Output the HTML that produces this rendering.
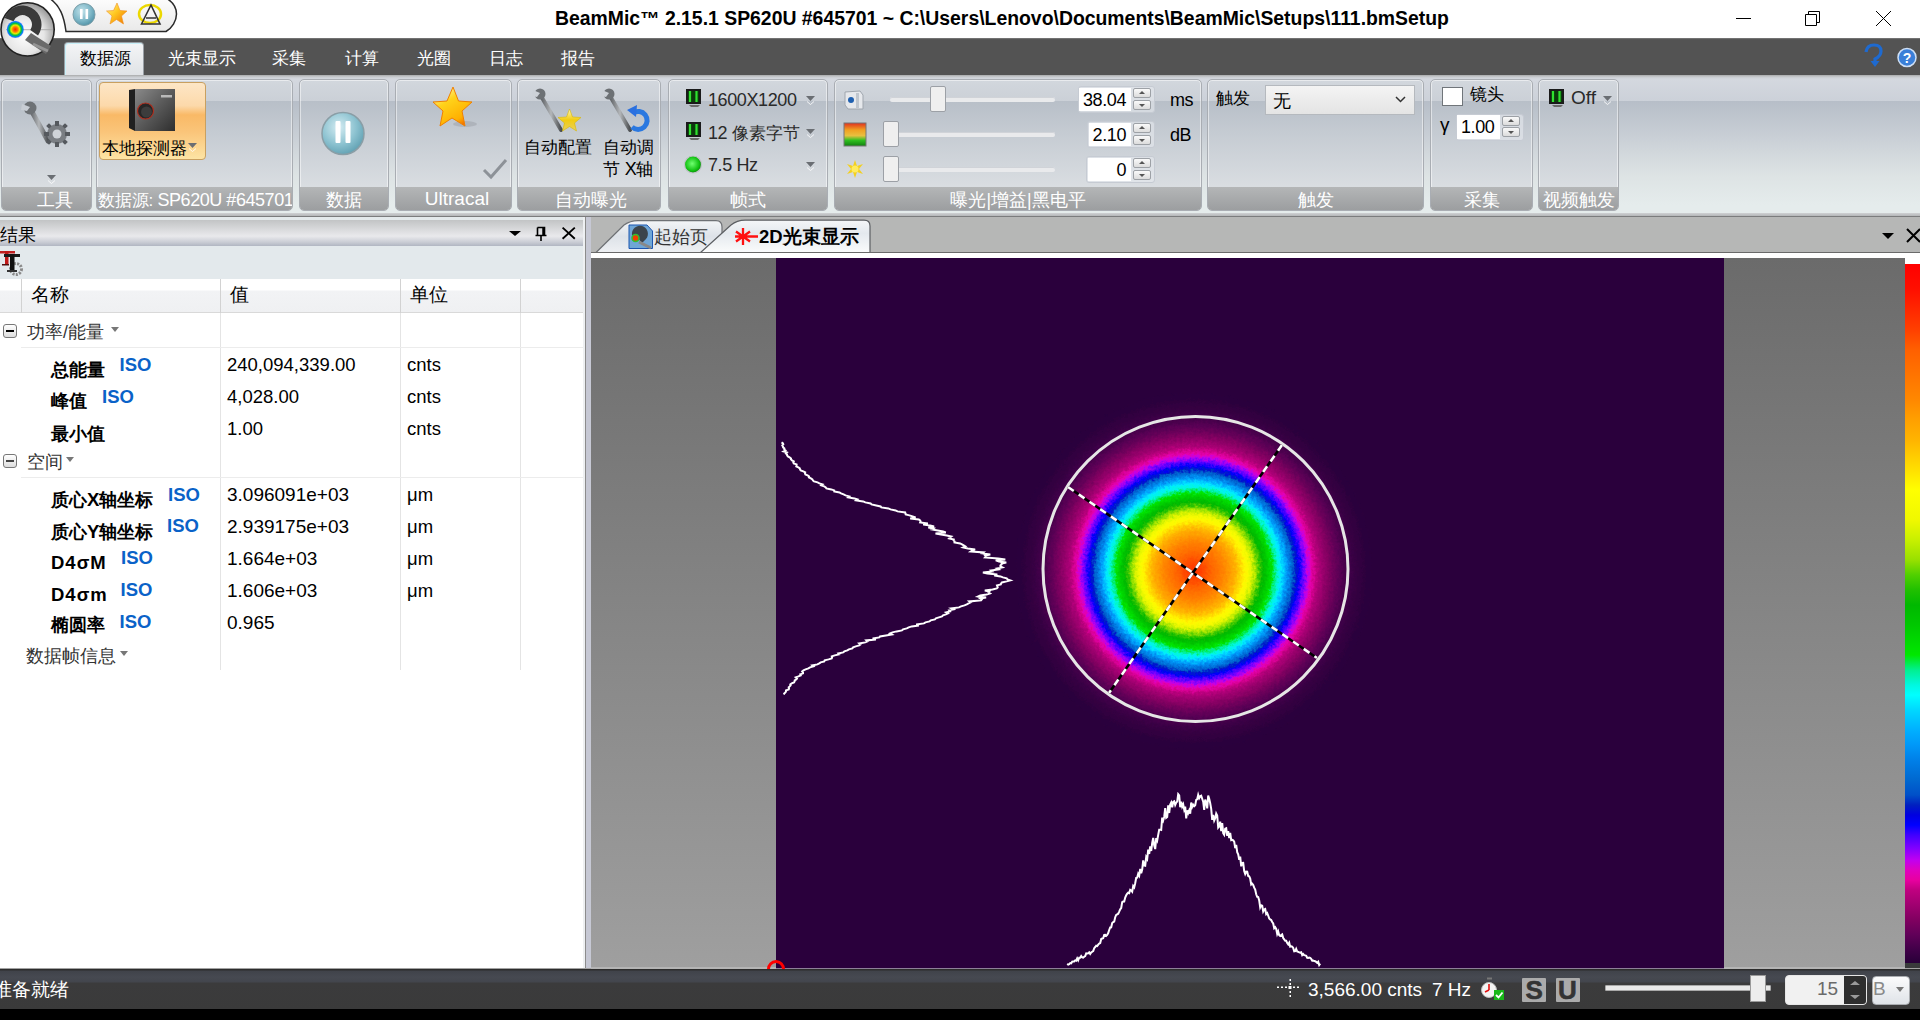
<!DOCTYPE html>
<html><head><meta charset="utf-8">
<style>
*{box-sizing:border-box;margin:0;padding:0}
html,body{width:1920px;height:1020px;overflow:hidden;background:#000;font-family:"Liberation Sans",sans-serif;color:#000}
.a{position:absolute}
.t{position:absolute;white-space:nowrap;line-height:20px}
.c17{font-size:17px}
.l18{font-size:18px;letter-spacing:-0.4px}
.r18{font-size:18.5px}
.b{font-weight:bold}
.mt{position:absolute;top:49px;color:#fff;font-size:17px;white-space:nowrap;line-height:20px}
.grp{position:absolute;top:79px;height:132px;border:1px solid #a9adb3;border-radius:5px;background:linear-gradient(#d2d7dd 0,#cbd0d7 21px,#b8bfc8 21.5px,#c6ccd3 55px,#d9dde1 106px);box-shadow:inset 0 0 0 1px rgba(255,255,255,.5);overflow:hidden}
.lbl{position:absolute;left:0;right:0;bottom:0;height:23.5px;background:linear-gradient(#b4b6b7,#9c9ea0);color:#fff;font-size:17.5px;text-align:center;line-height:20px;padding-top:3px;white-space:nowrap}
.spo{position:absolute;border:1px solid #c6cbd3;border-radius:3px;background:rgba(230,233,238,.6)}
.spw{position:absolute;background:#fff}
.sbtn{position:absolute;width:18px;height:10px;border:1px solid #9da1a6;border-radius:2px;background:linear-gradient(#fafafa,#dcdcdc)}
.sbtn.u::after{content:"";position:absolute;left:5px;top:2px;border-left:3.5px solid transparent;border-right:3.5px solid transparent;border-bottom:3px solid #555}
.sbtn.d::after{content:"";position:absolute;left:5px;top:3px;border-left:3.5px solid transparent;border-right:3.5px solid transparent;border-top:3px solid #555}
.track{position:absolute;height:5px;background:#e9eaec;border-radius:2px;box-shadow:inset 0 1px 0 #d0d3d8}
.thumb{position:absolute;width:16px;height:26px;background:#efefef;border:1px solid #9ca0a6;border-radius:2px}
.vline{position:absolute;width:1px;background:#e4e4e4}
.iso{position:absolute;color:#0a62c8;font-weight:bold;font-size:18.5px;line-height:20px}
.arr{position:absolute;width:0;height:0;border-left:4px solid transparent;border-right:4px solid transparent;border-top:5px solid #777}
</style></head><body>
<!-- TITLE BAR -->
<div class="a" style="left:0;top:0;width:1920px;height:39px;background:#fff"></div>
<div class="t b" style="left:555px;top:8px;font-size:19.4px">BeamMic™ 2.15.1 SP620U #645701 ~ C:\Users\Lenovo\Documents\BeamMic\Setups\111.bmSetup</div>
<div class="a" style="left:1736px;top:18px;width:15px;height:1px;background:#000"></div>
<svg class="a" style="left:1800px;top:5px" width="25" height="25"><path d="M5.5 9.5H16.5V20.5H5.5Z M8.5 9.5V6.5H19.5V17.5H16.5" fill="none" stroke="#000" stroke-width="1"/></svg>
<svg class="a" style="left:1870px;top:5px" width="25" height="25"><path d="M6 6L21 21M21 6L6 21" stroke="#000" stroke-width="1"/></svg>

<!-- MENU BAR -->
<div class="a" style="left:0;top:38px;width:1920px;height:37px;background:linear-gradient(#8a8a8a 0,#5a5a5a 1px,#535353 2px,#535353)"></div>
<!-- QAT -->
<svg class="a" style="left:0;top:0" width="200" height="80">
 <defs>
  <linearGradient id="qg" x1="0" y1="0" x2="0" y2="1"><stop offset="0" stop-color="#fdfdfd"/><stop offset="1" stop-color="#e9e9e9"/></linearGradient>
  <radialGradient id="orbg" cx="0.45" cy="0.6" r="0.6"><stop offset="0" stop-color="#ffffff"/><stop offset="0.6" stop-color="#e6e6e6"/><stop offset="1" stop-color="#9a9a9a"/></radialGradient>
  <radialGradient id="spot"><stop offset="0" stop-color="#ff2000"/><stop offset="0.3" stop-color="#ff8000"/><stop offset="0.5" stop-color="#e0f000"/><stop offset="0.7" stop-color="#00c040"/><stop offset="0.9" stop-color="#0080ff"/><stop offset="1" stop-color="#3060ff" stop-opacity="0.6"/></radialGradient>
  <radialGradient id="pg" cx="0.4" cy="0.35" r="0.7"><stop offset="0" stop-color="#c2e2ea"/><stop offset="0.6" stop-color="#7fb8c8"/><stop offset="1" stop-color="#4d8fa5"/></radialGradient>
  <linearGradient id="sg" x1="0" y1="0" x2="1" y2="1"><stop offset="0" stop-color="#fff2a0"/><stop offset="0.45" stop-color="#ffc820"/><stop offset="1" stop-color="#f07000"/></linearGradient>
 </defs>
 <path d="M49 -2 C60 5,64 16,66 31.5 L166 31.5 C172 28,176.5 21,176.5 14 C176.5 7,173 2,166 -2 Z" fill="url(#qg)" stroke="#2a2a2a" stroke-width="1.5"/>
 <!-- orb -->
 <circle cx="27.6" cy="29.4" r="26.6" fill="url(#orbg)" stroke="#222" stroke-width="1.6"/>
 <path d="M6 29.7 H53" stroke="#a8a8a8" stroke-width="1.2" opacity=".7"/>
 <path d="M4.65 18 A19 19 0 1 1 38.06 35.4 L30.3 29.95 A9.5 9.5 0 1 0 13.57 21.25 Z" fill="#3a3a3a"/>
 <path d="M25 40 L31 33 L51 46 L46 54 Z" fill="#6a6a6a"/>
 <path d="M33 44 L48 51" stroke="#a0a0a0" stroke-width="3" opacity=".8"/>
 <circle cx="15.3" cy="29.4" r="8.6" fill="url(#spot)"/>
 <!-- pause -->
 <circle cx="84" cy="14.5" r="11" fill="url(#pg)" stroke="#7c9ea8" stroke-width="1"/>
 <rect x="80" y="9" width="2.6" height="10" fill="#fff"/><rect x="85.5" y="9" width="2.6" height="10" fill="#fff"/>
 <!-- star -->
 <path d="M117 3 L120 10.5 L127 11 L121.5 16 L123.5 24 L116.5 19.5 L110 24 L112 16 L106.5 11 L113.5 10.5 Z" fill="url(#sg)" stroke="#f09020" stroke-width="0.6"/>
 <!-- A icon -->
 <ellipse cx="150" cy="14" rx="11" ry="9" fill="none" stroke="#ecd800" stroke-width="2.5"/>
 <path d="M141.5 24 L151 5 L160 24 Z M146 18 L156 18" fill="none" stroke="#333" stroke-width="1.6"/>
</svg>
<!-- active tab -->
<div class="a" style="left:64px;top:42px;width:80px;height:34px;border:1px solid #9aa0a6;border-bottom:none;border-radius:4px 4px 0 0;background:linear-gradient(#f4f5f6,#dfe2e6);box-shadow:inset 1px 1px 0 #c8f0f8"></div>
<div class="mt" style="left:80px;color:#000">数据源</div>
<div class="mt" style="left:168px">光束显示</div>
<div class="mt" style="left:272px">采集</div>
<div class="mt" style="left:345px">计算</div>
<div class="mt" style="left:417px">光圈</div>
<div class="mt" style="left:489px">日志</div>
<div class="mt" style="left:561px">报告</div>

<!-- RIBBON -->
<div class="a" style="left:0;top:75px;width:1920px;height:142px;background:linear-gradient(#a9aaab 0,#c9ccd0 2px,#d4d8df 4px,#ccd1d9 26px,#b7bec8 26.5px,#c8ced5 60px,#dde3e4 100px,#e5ecec 130px,#e5ecec 138px,#cfd1d3 138px,#b4b6b8 141px,#7b7c7d 141px,#7b7c7d 142px)"></div>
<div class="grp" style="left:1px;width:91px"><div class="lbl" style="padding-left:16px">工具</div></div>
<div class="grp" style="left:96px;width:197px"><div class="lbl" style="text-align:left;padding-left:1px;font-size:17px;letter-spacing:-0.2px">数据源: <span style="font-size:18px;letter-spacing:-0.45px">SP620U #645701</span></div></div>
<div class="grp" style="left:299px;width:90px"><div class="lbl">数据</div></div>
<div class="grp" style="left:395px;width:117px"><div class="lbl" style="font-size:19px;padding-left:7px;padding-top:2.5px">Ultracal</div></div>
<div class="grp" style="left:517px;width:144px"><div class="lbl" style="padding-left:4px">自动曝光</div></div>
<div class="grp" style="left:668px;width:160px"><div class="lbl">帧式</div></div>
<div class="grp" style="left:834px;width:368px"><div class="lbl">曝光|增益|黑电平</div></div>
<div class="grp" style="left:1207px;width:217px"><div class="lbl">触发</div></div>
<div class="grp" style="left:1430px;width:103px"><div class="lbl">采集</div></div>
<div class="grp" style="left:1538px;width:81px"><div class="lbl">视频触发</div></div>

<div class="a" style="left:99px;top:82px;width:107px;height:78px;border:1px solid #c9a060;border-radius:4px;background:linear-gradient(#fde6c6 0,#fcd9aa 30%,#f9b966 42%,#fac57a 65%,#fde4a4 100%)"></div>
<div class="t c17" style="left:102px;top:139px">本地探测器</div>
<div class="t c17" style="left:524px;top:138px">自动配置</div>
<div class="t c17" style="left:603px;top:138px">自动调</div>
<div class="t c17" style="left:603px;top:159px">节 <span class="l18">X</span>轴</div>

<div class="t l18" style="left:708px;top:89.5px;color:#2a2a2a">1600X1200</div>
<div class="t c17" style="left:708px;top:122.8px;color:#2a2a2a"><span class="l18">12</span> 像素字节</div>
<div class="t l18" style="left:708px;top:154.8px;color:#2a2a2a">7.5 Hz</div>

<div class="track" style="left:890px;top:97px;width:165px"></div>
<div class="track" style="left:890px;top:132px;width:165px"></div>
<div class="track" style="left:890px;top:167px;width:165px"></div>
<div class="thumb" style="left:930px;top:86px"></div>
<div class="thumb" style="left:883px;top:121px"></div>
<div class="thumb" style="left:883px;top:156px"></div>

<div class="spo" style="left:1078px;top:86px;width:77px;height:27px"></div><div class="spw" style="left:1079px;top:88px;width:52px;height:23px"></div>
<div class="spo" style="left:1087px;top:121px;width:68px;height:27px"></div><div class="spw" style="left:1089px;top:123px;width:42px;height:23px"></div>
<div class="spo" style="left:1086px;top:156px;width:69px;height:27px"></div><div class="spw" style="left:1088px;top:158px;width:43px;height:23px"></div>
<div class="sbtn u" style="left:1133px;top:88px"></div><div class="sbtn d" style="left:1133px;top:100px"></div>
<div class="sbtn u" style="left:1133px;top:123px"></div><div class="sbtn d" style="left:1133px;top:135px"></div>
<div class="sbtn u" style="left:1133px;top:158px"></div><div class="sbtn d" style="left:1133px;top:170px"></div>
<div class="t l18" style="left:1082px;top:90px;width:44px;text-align:right">38.04</div>
<div class="t l18" style="left:1082px;top:125px;width:44px;text-align:right">2.10</div>
<div class="t l18" style="left:1082px;top:160px;width:44px;text-align:right">0</div>
<div class="t l18" style="left:1170px;top:90px">ms</div>
<div class="t l18" style="left:1170px;top:125px">dB</div>

<div class="t c17" style="left:1216px;top:89px">触发</div>
<div class="a" style="left:1265px;top:85px;width:150px;height:30px;border:1px solid #b5b9be;background:linear-gradient(#f4f4f4,#e4e4e4)"></div>
<div class="t" style="left:1273px;top:91px;font-size:18px">无</div>

<div class="a" style="left:1442px;top:87px;width:21px;height:19px;background:#fff;border:1px solid #70757a"></div>
<div class="t c17" style="left:1470px;top:85px">镜头</div>
<div class="t l18" style="left:1440px;top:115px;font-size:19px">γ</div>
<div class="spo" style="left:1456px;top:114px;width:68px;height:27px"></div><div class="spw" style="left:1457px;top:115px;width:43px;height:24px"></div>
<div class="sbtn u" style="left:1502px;top:116px"></div><div class="sbtn d" style="left:1502px;top:127px"></div>
<div class="t l18" style="left:1461px;top:117.3px">1.00</div>
<div class="t" style="left:1571px;top:88px;font-size:19px;color:#2a2a2a">Off</div>

<!-- RIBBON ICONS -->
<svg class="a" style="left:0;top:0;pointer-events:none" width="1920" height="220">
 <defs>
  <linearGradient id="wr" x1="0" y1="0" x2="1" y2="0"><stop offset="0" stop-color="#5c5f63"/><stop offset="0.5" stop-color="#b4b7ba"/><stop offset="1" stop-color="#4a4d50"/></linearGradient>
  <linearGradient id="cam" x1="0" y1="0" x2="1" y2="1"><stop offset="0" stop-color="#8a8a8a"/><stop offset="0.5" stop-color="#5a5a5a"/><stop offset="1" stop-color="#2e2e2e"/></linearGradient>
  <radialGradient id="pg2" cx="0.4" cy="0.35" r="0.75"><stop offset="0" stop-color="#d4ecf2"/><stop offset="0.55" stop-color="#8cc2d0"/><stop offset="1" stop-color="#5698ab"/></radialGradient>
  <linearGradient id="sg2" x1="0.2" y1="0" x2="0.8" y2="1"><stop offset="0" stop-color="#fff7b0"/><stop offset="0.35" stop-color="#ffd21a"/><stop offset="0.8" stop-color="#ffb000"/><stop offset="1" stop-color="#f06000"/></linearGradient>
  <linearGradient id="sg3" x1="0" y1="0" x2="0" y2="1"><stop offset="0" stop-color="#fff8c0"/><stop offset="0.5" stop-color="#f2cc10"/><stop offset="1" stop-color="#e8d060"/></linearGradient>
  <radialGradient id="gclk" cx="0.45" cy="0.45" r="0.6"><stop offset="0" stop-color="#70ff70"/><stop offset="0.7" stop-color="#10c010"/><stop offset="1" stop-color="#087008"/></radialGradient>
  <linearGradient id="cbar" x1="0" y1="0" x2="0" y2="1"><stop offset="0" stop-color="#e03020"/><stop offset="0.3" stop-color="#f0a020"/><stop offset="0.55" stop-color="#e8c040"/><stop offset="0.75" stop-color="#30c020"/><stop offset="1" stop-color="#108010"/></linearGradient>
  <g id="mon"><rect x="0" y="0" width="15" height="15" fill="#1a1a1a"/><rect x="2" y="2" width="11" height="11" fill="#0b3a0b"/><path d="M4 2V13M10.5 2V13" stroke="#30e030" stroke-width="2.2"/><path d="M3 16H14L12 18H5Z" fill="#6a6a6a"/></g>
  <g id="darr"><path d="M0 0H9L4.5 5Z" fill="#6a6e73"/><path d="M1 5.5L4.5 8.5L8 5.5" fill="none" stroke="#fff" stroke-width="1" opacity=".8"/></g>
 </defs>
 <!-- tools -->
 <g>
  <path d="M30 108 L48 141" stroke="url(#wr)" stroke-width="5" stroke-linecap="round"/>
  <circle cx="30" cy="108" r="6.5" fill="#6d7175"/><path d="M22 104 L30 107 L27 111 L21 110 Z" fill="#c8cdd4"/>
  <circle cx="57" cy="134" r="10" fill="#7a7e83"/>
  <g fill="#55595e"><rect x="55" y="121" width="4" height="5"/><rect x="55" y="142" width="4" height="5"/><rect x="44" y="132" width="5" height="4"/><rect x="65" y="132" width="5" height="4"/><rect x="47" y="124" width="4" height="4" transform="rotate(45 49 126)"/><rect x="63" y="124" width="4" height="4" transform="rotate(45 65 126)"/><rect x="47" y="140" width="4" height="4" transform="rotate(45 49 142)"/><rect x="63" y="140" width="4" height="4" transform="rotate(45 65 142)"/></g>
  <circle cx="57" cy="134" r="4.5" fill="#cfd3d8"/>
  <use href="#darr" x="47" y="175"/>
 </g>
 <!-- camera -->
 <path d="M129 90 L135 89 L135 131 L129 128 Z" fill="#202020"/>
 <rect x="135" y="89" width="40" height="42" fill="url(#cam)"/>
 <circle cx="145.5" cy="111" r="8" fill="#262626" stroke="#b03020" stroke-width="1.2"/>
 <circle cx="146.5" cy="112" r="5.5" fill="#3c3c3c"/>
 <rect x="161" y="95" width="11" height="2.5" fill="#d0d0d0" opacity=".8"/>
 <use href="#darr" x="188" y="143" transform="translate(0,0) scale(1)"/>
 <!-- pause big -->
 <circle cx="343" cy="133.5" r="21" fill="url(#pg2)" stroke="#8a9ea6" stroke-width="1.5"/>
 <rect x="335.5" y="121" width="5" height="22" rx="1" fill="#fff"/><rect x="345.5" y="121" width="5" height="22" rx="1" fill="#fff"/>
 <!-- big star -->
 <path d="M437 142 L447 136 L462 144 L468 129 L452 118" fill="none"/>
 <ellipse cx="465" cy="124" rx="12" ry="3" fill="#8b9096" opacity=".35"/>
 <path d="M453 87 L458.5 101 L472 102 L462 111 L465 126 L452 118 L440 126 L443 111 L433 102 L447 101 Z" fill="url(#sg2)" stroke="#f08000" stroke-width="1"/>
 <path d="M484 170 L491 177 L506 160" fill="none" stroke="#8d9298" stroke-width="3"/>
 <!-- wrench + star -->
 <path d="M541 96 L561 130" stroke="url(#wr)" stroke-width="4" stroke-linecap="round"/>
 <circle cx="540" cy="94" r="5.5" fill="#6d7175"/><path d="M533 90 L540 93 L537 97 L532 96 Z" fill="#ccd1d7"/>
 <path d="M569.5 109 L572.5 117 L581 117.5 L574.5 123 L576.5 131 L569.5 126.5 L562.5 131 L564.5 123 L558 117.5 L566.5 117 Z" fill="url(#sg3)" stroke="#d8b800" stroke-width=".6"/>
 <!-- wrench + rotate -->
 <path d="M610 96 L630 130" stroke="url(#wr)" stroke-width="4" stroke-linecap="round"/>
 <circle cx="609" cy="94" r="5.5" fill="#6d7175"/><path d="M602 90 L609 93 L606 97 L601 96 Z" fill="#ccd1d7"/>
 <path d="M633 113 A9 9 0 1 1 632 127" fill="none" stroke="#2a78e0" stroke-width="5"/>
 <path d="M627 110 L637 105 L636 117 Z" fill="#2a70e0"/>
 <!-- frame icons -->
 <use href="#mon" x="686" y="89"/>
 <use href="#mon" x="686" y="122"/>
 <circle cx="693" cy="164.5" r="8.5" fill="url(#gclk)" stroke="#c0c4c8" stroke-width="1.2"/>
 <use href="#darr" x="806" y="96"/>
 <use href="#darr" x="806" y="129"/>
 <use href="#darr" x="806" y="162"/>
 <!-- exposure icons -->
 <path d="M845 92 L860 91 L863 95 L863 109 L848 109 L845 105Z" fill="#e6e8ec" stroke="#a0a6ae" stroke-width="1"/>
 <circle cx="851" cy="100" r="3" fill="#2060b0"/>
 <rect x="856" y="93" width="3" height="15" fill="#c0c6ce"/>
 <rect x="844" y="123" width="22" height="23" fill="url(#cbar)" stroke="#777" stroke-width="1"/>
 <g transform="translate(855,169)"><path d="M0 -9L2 -3L8 -5L4 0L8 5L2 3L0 9L-2 3L-8 5L-4 0L-8 -5L-2 -3Z" fill="#f3d020"/><circle r="3.5" fill="#ffec60"/></g>
 <!-- off icon -->
 <use href="#mon" x="1549" y="89"/>
 <use href="#darr" x="1603" y="96"/>
 <!-- combobox arrow -->
 <path d="M1396 97 L1400.5 101.5 L1405 97" fill="none" stroke="#333" stroke-width="1.5"/>
 <!-- help icons -->
 <path d="M1866 52 Q1867 45 1874 45 Q1881 45 1881 51 Q1881 56 1875 59 L1875 62" fill="none" stroke="#1e6ad0" stroke-width="3.2"/><path d="M1870.5 61 L1879.5 61 L1875 67 Z" fill="#1e6ad0"/>
 <circle cx="1907" cy="57.5" r="9" fill="#3a7fd8" stroke="#cfe0f6" stroke-width="1.5"/>
 <text x="1907" y="63" text-anchor="middle" font-family="Liberation Sans" font-weight="bold" font-size="14" fill="#fff">?</text>
</svg>
<!-- LEFT PANEL -->
<div class="a" style="left:0;top:217px;width:583px;height:751px;background:#fff"></div>
<div class="a" style="left:0;top:217px;width:583px;height:3px;background:#e3e9eb"></div>
<div class="a" style="left:0;top:220px;width:583px;height:26px;background:linear-gradient(#c2c4c5 0,#d8d9db 35%,#e9e9ec 62%,#cacdd5 85%,#b1b6c2 100%)"></div>
<div class="t" style="left:0;top:224.6px;font-size:17.5px">结果</div>
<div class="a" style="left:509px;top:231px;width:0;height:0;border-left:6px solid transparent;border-right:6px solid transparent;border-top:5.5px solid #000"></div>
<svg class="a" style="left:530px;top:222px" width="22" height="22"><path d="M7.5 5.5H14.5V13M7.5 5.5V13M5.5 13.5H16.5M11 13.5V19" fill="none" stroke="#000" stroke-width="1.6"/><path d="M13.5 5.5V13" stroke="#000" stroke-width="2.5"/></svg>
<svg class="a" style="left:560px;top:225px" width="18" height="18"><path d="M2.6 2.6L14.8 13.7M14.8 2.6L2.6 13.7" stroke="#000" stroke-width="1.9"/></svg>
<div class="a" style="left:0;top:246px;width:583px;height:33px;background:#e3e9ec"></div>
<svg class="a" style="left:0;top:249px" width="30" height="30">
 <rect x="0" y="2" width="15" height="2.5" fill="#c02020"/><rect x="5" y="2" width="3.5" height="14" fill="#c01818"/><rect x="2" y="15" width="7" height="1.5" fill="#501010"/>
 <circle cx="16" cy="20" r="5.5" fill="none" stroke="#8a8a8a" stroke-width="3" stroke-dasharray="2 1.3"/>
 <rect x="4" y="5" width="16" height="3" fill="#1a1a1a"/><rect x="10" y="5" width="4.5" height="17" fill="#111"/><rect x="7" y="21" width="10" height="2" fill="#333"/>
</svg>
<div class="a" style="left:0;top:279px;width:583px;height:34px;background:linear-gradient(#fff 0,#fff 11px,#f2f3f5 12px,#eff0f2 33px,#d9d9d9 33px)"></div>
<div class="vline" style="left:21px;top:279px;height:34px;background:#d2d2d2"></div>
<div class="vline" style="left:220px;top:279px;height:34px;background:#d2d2d2"></div>
<div class="vline" style="left:400px;top:279px;height:34px;background:#d2d2d2"></div>
<div class="vline" style="left:520px;top:279px;height:34px;background:#d2d2d2"></div>
<div class="vline" style="left:220px;top:313px;height:357px"></div>
<div class="vline" style="left:400px;top:313px;height:357px"></div>
<div class="vline" style="left:520px;top:313px;height:357px"></div>
<div class="a" style="left:21px;top:347px;width:562px;height:1px;background:#ececec"></div>
<div class="a" style="left:21px;top:477px;width:562px;height:1px;background:#ececec"></div>
<div class="t r18" style="left:31px;top:284.8px">名称</div>
<div class="t r18" style="left:230px;top:284.8px">值</div>
<div class="t r18" style="left:410px;top:284.8px">单位</div>

<div class="a" style="left:3px;top:324px;width:14px;height:14px;border:1.5px solid #777;border-radius:3px;background:linear-gradient(#fff,#ddd)"></div><div class="a" style="left:6px;top:330px;width:8px;height:2px;background:#000"></div>
<div class="t" style="left:27px;top:321.5px;font-size:17.5px;color:#333">功率/能量</div><div class="arr" style="left:111px;top:327px"></div>
<div class="t b" style="left:51px;top:359.6px;font-size:17.5px">总能量</div><div class="iso" style="left:119.5px;top:354.5px">ISO</div>
<div class="t r18" style="left:227px;top:355px">240,094,339.00</div><div class="t r18" style="left:407px;top:355px">cnts</div>
<div class="t b" style="left:51px;top:391px;font-size:17.5px">峰值</div><div class="iso" style="left:102px;top:386.7px">ISO</div>
<div class="t r18" style="left:227px;top:387px">4,028.00</div><div class="t r18" style="left:407px;top:387px">cnts</div>
<div class="t b" style="left:51px;top:424px;font-size:17.5px">最小值</div>
<div class="t r18" style="left:227px;top:418.5px">1.00</div><div class="t r18" style="left:407px;top:418.5px">cnts</div>
<div class="a" style="left:3px;top:454px;width:14px;height:14px;border:1.5px solid #777;border-radius:3px;background:linear-gradient(#fff,#ddd)"></div><div class="a" style="left:6px;top:460px;width:8px;height:1.5px;background:#444"></div>
<div class="t" style="left:27px;top:452px;font-size:17.5px;color:#333">空间</div><div class="arr" style="left:66px;top:457px"></div>
<div class="t b" style="left:51px;top:490px;font-size:17.5px">质心<span style="font-size:18.5px">X</span>轴坐标</div><div class="iso" style="left:168px;top:485px">ISO</div>
<div class="t r18" style="left:227px;top:485px;font-size:19px">3.096091e+03</div><div class="t r18" style="left:407px;top:485px">μm</div>
<div class="t b" style="left:51px;top:522px;font-size:17.5px">质心<span style="font-size:18.5px">Y</span>轴坐标</div><div class="iso" style="left:167px;top:516.4px">ISO</div>
<div class="t r18" style="left:227px;top:517px;font-size:19px">2.939175e+03</div><div class="t r18" style="left:407px;top:517px">μm</div>
<div class="t b" style="left:51px;top:553px;font-size:18.5px;letter-spacing:1px">D4σM</div><div class="iso" style="left:121px;top:548px">ISO</div>
<div class="t r18" style="left:227px;top:549px;font-size:19px">1.664e+03</div><div class="t r18" style="left:407px;top:549px">μm</div>
<div class="t b" style="left:51px;top:585px;font-size:18.5px;letter-spacing:1px">D4σm</div><div class="iso" style="left:120.5px;top:580.4px">ISO</div>
<div class="t r18" style="left:227px;top:581px;font-size:19px">1.606e+03</div><div class="t r18" style="left:407px;top:581px">μm</div>
<div class="t b" style="left:51px;top:615px;font-size:17.5px">椭圆率</div><div class="iso" style="left:119.5px;top:612.3px">ISO</div>
<div class="t r18" style="left:227px;top:613px;font-size:19px">0.965</div>
<div class="t" style="left:26px;top:645.6px;font-size:18px;color:#333">数据帧信息</div><div class="arr" style="left:120px;top:651px"></div>

<!-- splitter -->
<div class="a" style="left:583px;top:217px;width:8px;height:751px;background:linear-gradient(90deg,#eef0f2 0,#eef0f2 2px,#8c8c8c 2px,#8c8c8c 3px,#c6c8d4 3px,#c6c8d4 8px)"></div>

<!-- DOC AREA -->
<div class="a" style="left:591px;top:217px;width:1329px;height:36px;background:#b6b7b6"></div>
<svg class="a" style="left:591px;top:217px" width="300" height="42">
 <defs><linearGradient id="tabg" x1="0" y1="0" x2="0" y2="1"><stop offset="0" stop-color="#f3f5f7"/><stop offset="0.5" stop-color="#dde2e8"/><stop offset="1" stop-color="#eef0f3"/></linearGradient>
 <linearGradient id="tabw" x1="0" y1="0" x2="0" y2="1"><stop offset="0" stop-color="#f4f6f8"/><stop offset="0.4" stop-color="#e4e9ee"/><stop offset="1" stop-color="#fbfcfc"/></linearGradient></defs>
 <path d="M5 35.5 L33 8 Q39 3.6 47 3.6 L125 3.6 Q131 3.6 131 10 L131 35.5 Z" fill="url(#tabg)" stroke="#6e7175" stroke-width="1.2"/>
 <path d="M109 36 L140 8 Q146 3.2 154 3.2 L273 3.2 Q279 3.2 279 9 L279 36 Z" fill="url(#tabw)" stroke="#5c5f63" stroke-width="1.2"/>
 <!-- start page icon -->
 <path d="M38 8 L56 8 L61.5 14 L61.5 31.5 L38 31.5 Z" fill="#6fa6d6" stroke="#1d56b0" stroke-width="1"/>
 <path d="M41 18 A8 8 0 1 1 55 22 L51 26 L47 21" fill="#333" opacity=".85"/>
 <circle cx="44.5" cy="21" r="3.5" fill="#f04000" stroke="#30c030" stroke-width="1.5"/>
 <path d="M48 25 L60 31" stroke="#888" stroke-width="3"/>
 <!-- laser icon -->
 <g stroke="#ff1010" stroke-width="2.3"><path d="M152 11V28M145 14.5L159 24.5M145 24.5L159 14.5M144 19.5H167"/></g>
</svg>
<div class="a" style="left:591px;top:252px;width:1329px;height:6px;background:#fff;border-top:1px solid #6a6a6a"></div>
<div class="t" style="left:654px;top:227.3px;font-size:18px;color:#333">起始页</div>
<div class="t b" style="left:759px;top:227.3px;font-size:18.5px">2D光束显示</div>
<div class="a" style="left:1882px;top:233px;width:0;height:0;border-left:6px solid transparent;border-right:6px solid transparent;border-top:6px solid #000"></div>
<svg class="a" style="left:1905px;top:226px" width="15" height="20"><path d="M2 3L15 16M15 3L2 16" stroke="#000" stroke-width="2"/></svg>

<div class="a" style="left:591px;top:258px;width:185px;height:710px;background:linear-gradient(#6b6b6b,#9f9f9f)"></div>
<div class="a" style="left:1724px;top:258px;width:181px;height:710px;background:linear-gradient(#6b6b6b,#9f9f9f)"></div>
<!-- BEAM -->
<svg class="a" style="left:776px;top:258px" width="948" height="710" viewBox="776 258 948 710">
 <defs>
  <radialGradient id="beam" gradientUnits="userSpaceOnUse" cx="1194" cy="571" r="178">
   <stop offset="0.000" stop-color="#ff3400"/>
   <stop offset="0.017" stop-color="#ff3a00"/>
   <stop offset="0.034" stop-color="#ff4000"/>
   <stop offset="0.051" stop-color="#ff4800"/>
   <stop offset="0.067" stop-color="#ff5000"/>
   <stop offset="0.084" stop-color="#ff5e00"/>
   <stop offset="0.101" stop-color="#ff6600"/>
   <stop offset="0.118" stop-color="#ff6e00"/>
   <stop offset="0.135" stop-color="#ff7500"/>
   <stop offset="0.152" stop-color="#ff7d00"/>
   <stop offset="0.169" stop-color="#ff8500"/>
   <stop offset="0.185" stop-color="#ff9000"/>
   <stop offset="0.202" stop-color="#ff9c00"/>
   <stop offset="0.219" stop-color="#ffa600"/>
   <stop offset="0.236" stop-color="#ffb400"/>
   <stop offset="0.253" stop-color="#ffca00"/>
   <stop offset="0.270" stop-color="#ffe000"/>
   <stop offset="0.287" stop-color="#fff700"/>
   <stop offset="0.303" stop-color="#f8fb00"/>
   <stop offset="0.320" stop-color="#e6f600"/>
   <stop offset="0.337" stop-color="#b9eb00"/>
   <stop offset="0.354" stop-color="#7ad900"/>
   <stop offset="0.371" stop-color="#30c500"/>
   <stop offset="0.388" stop-color="#02b800"/>
   <stop offset="0.404" stop-color="#00c400"/>
   <stop offset="0.421" stop-color="#00d400"/>
   <stop offset="0.438" stop-color="#00e500"/>
   <stop offset="0.455" stop-color="#00ef81"/>
   <stop offset="0.472" stop-color="#00f7dc"/>
   <stop offset="0.489" stop-color="#00ecff"/>
   <stop offset="0.506" stop-color="#00bdff"/>
   <stop offset="0.522" stop-color="#0098f8"/>
   <stop offset="0.539" stop-color="#0079e1"/>
   <stop offset="0.556" stop-color="#005dcc"/>
   <stop offset="0.573" stop-color="#0016c9"/>
   <stop offset="0.590" stop-color="#0000fa"/>
   <stop offset="0.607" stop-color="#4700ff"/>
   <stop offset="0.624" stop-color="#8600fd"/>
   <stop offset="0.640" stop-color="#c600e5"/>
   <stop offset="0.657" stop-color="#e400b0"/>
   <stop offset="0.674" stop-color="#d60092"/>
   <stop offset="0.691" stop-color="#b8007c"/>
   <stop offset="0.708" stop-color="#a60073"/>
   <stop offset="0.725" stop-color="#99006c"/>
   <stop offset="0.742" stop-color="#8c0066"/>
   <stop offset="0.758" stop-color="#800060"/>
   <stop offset="0.775" stop-color="#73005c"/>
   <stop offset="0.792" stop-color="#670059"/>
   <stop offset="0.809" stop-color="#5d0056"/>
   <stop offset="0.826" stop-color="#540052"/>
   <stop offset="0.843" stop-color="#4a004d"/>
   <stop offset="0.860" stop-color="#44004a"/>
   <stop offset="0.876" stop-color="#3e0047"/>
   <stop offset="0.893" stop-color="#390044"/>
   <stop offset="0.910" stop-color="#350042"/>
   <stop offset="0.927" stop-color="#330040"/>
   <stop offset="0.944" stop-color="#30003f"/>
   <stop offset="0.961" stop-color="#2d003d"/>
   <stop offset="0.978" stop-color="#2a003c"/>
   <stop offset="0.994" stop-color="#2a003c"/>
  </radialGradient>
 <filter id="grain" x="-10%" y="-10%" width="120%" height="120%"><feTurbulence type="fractalNoise" baseFrequency="0.35" numOctaves="2" seed="3"/><feDisplacementMap in="SourceGraphic" scale="7" xChannelSelector="R" yChannelSelector="G"/></filter>
 </defs>
 <rect x="776" y="258" width="948" height="710" fill="#2a003c"/>
 <circle cx="1194" cy="571" r="178" fill="url(#beam)" filter="url(#grain)"/>
 <circle cx="1195.5" cy="569" r="152.5" fill="none" stroke="#e6e6e6" stroke-width="3"/>
 <line x1="1068" y1="487" x2="1317" y2="658" stroke="#000" stroke-width="2.6"/>
 <line x1="1068" y1="487" x2="1317" y2="658" stroke="#fff" stroke-width="2.6" stroke-dasharray="7 6"/>
 <line x1="1282" y1="445" x2="1109" y2="693" stroke="#000" stroke-width="2.6"/>
 <line x1="1282" y1="445" x2="1109" y2="693" stroke="#fff" stroke-width="2.6" stroke-dasharray="7 6"/>
 <polyline points="781.5,442.4 783.0,443.4 783.3,444.4 782.3,445.4 782.9,446.4 783.1,447.4 784.4,448.4 784.3,449.4 785.4,450.4 783.6,451.4 786.9,452.4 785.9,453.4 787.0,454.4 787.1,455.4 787.9,456.4 789.6,457.4 791.0,458.4 791.0,459.4 792.0,460.4 793.8,461.4 793.3,462.4 793.7,463.4 796.6,464.4 796.6,465.4 796.3,466.4 798.4,467.4 799.8,468.4 800.0,469.4 800.7,470.4 803.3,471.4 805.2,472.4 805.0,473.4 805.4,474.4 807.6,475.4 809.1,476.4 808.9,477.4 810.9,478.4 812.4,479.4 812.9,480.4 814.0,481.4 817.6,482.4 819.4,483.4 822.5,484.4 821.3,485.4 824.2,486.4 825.8,487.4 826.4,488.4 831.3,489.4 834.2,490.4 834.2,491.4 839.5,492.4 841.0,493.4 843.6,494.4 845.5,495.4 849.3,496.4 848.2,497.4 854.5,498.4 857.5,499.4 856.2,500.4 863.2,501.4 865.3,502.4 870.6,503.4 871.5,504.4 876.2,505.4 880.6,506.4 881.3,507.4 888.4,508.4 890.5,509.4 895.6,510.4 897.5,511.4 905.2,512.4 905.4,513.4 905.7,514.4 909.4,515.4 912.6,516.4 915.6,517.4 910.2,518.4 918.8,519.4 920.1,520.4 920.6,521.4 920.2,522.4 927.9,523.4 923.2,524.4 930.1,525.4 934.1,526.4 928.3,527.4 933.6,528.4 932.1,529.4 937.8,530.4 943.1,531.4 945.8,532.4 935.5,533.4 941.0,534.4 946.8,535.4 951.3,536.4 950.0,537.4 949.1,538.4 953.8,539.4 953.6,540.4 954.6,541.4 954.5,542.4 960.1,543.4 962.0,544.4 963.7,545.4 965.3,546.4 963.2,547.4 967.8,548.4 975.1,549.4 972.5,550.4 970.9,551.4 983.5,552.4 982.3,553.4 990.3,554.4 985.1,555.4 986.0,556.4 985.1,557.4 998.2,558.4 1005.3,559.4 995.7,560.4 999.0,561.4 1006.3,562.4 1001.6,563.4 1001.7,564.4 1000.4,565.4 1000.4,566.4 1002.3,567.4 997.0,568.4 998.6,569.4 991.1,570.4 992.2,571.4 982.9,572.4 987.4,573.4 997.3,574.4 994.3,575.4 1000.5,576.4 1002.9,577.4 1006.7,578.4 1007.5,579.4 1010.3,580.4 1006.7,581.4 1001.9,582.4 1001.1,583.4 1000.8,584.4 997.0,585.4 997.4,586.4 997.7,587.4 996.8,588.4 992.5,589.4 984.8,590.4 989.3,591.4 988.4,592.4 989.9,593.4 986.5,594.4 980.3,595.4 978.2,596.4 986.1,597.4 980.2,598.4 981.9,599.4 981.1,600.4 969.4,601.4 970.7,602.4 968.5,603.4 966.8,604.4 964.5,605.4 961.0,606.4 959.0,607.4 951.4,608.4 953.4,609.4 949.2,610.4 950.0,611.4 946.2,612.4 947.9,613.4 945.9,614.4 943.0,615.4 942.0,616.4 938.9,617.4 935.9,618.4 934.9,619.4 930.7,620.4 929.5,621.4 925.5,622.4 923.9,623.4 916.2,624.4 918.9,625.4 911.7,626.4 908.7,627.4 906.8,628.4 903.0,629.4 901.9,630.4 896.6,631.4 892.5,632.4 890.1,633.4 891.8,634.4 885.9,635.4 880.0,636.4 879.3,637.4 872.6,638.4 875.9,639.4 866.3,640.4 867.3,641.4 865.2,642.4 859.3,643.4 860.5,644.4 859.2,645.4 855.8,646.4 853.1,647.4 852.4,648.4 848.9,649.4 847.3,650.4 844.3,651.4 843.2,652.4 838.3,653.4 839.0,654.4 834.7,655.4 831.8,656.4 832.1,657.4 831.7,658.4 828.6,659.4 824.7,660.4 824.3,661.4 820.7,662.4 819.3,663.4 817.4,664.4 812.3,665.4 813.5,666.4 810.0,667.4 808.4,668.4 805.6,669.4 803.5,670.4 802.2,671.4 803.0,672.4 803.0,673.4 800.3,674.4 800.7,675.4 798.4,676.4 795.8,677.4 797.0,678.4 796.5,679.4 794.7,680.4 794.6,681.4 794.0,682.4 791.7,683.4 790.3,684.4 790.6,685.4 789.7,686.4 788.7,687.4 789.0,688.4 788.7,689.4 786.0,690.4 786.1,691.4 785.4,692.4 784.3,693.4 783.7,694.4" fill="none" stroke="#fff" stroke-width="2" stroke-linejoin="miter"/>
 <polyline points="1067.2,963.9 1068.2,964.6 1069.2,964.1 1070.2,963.1 1071.2,963.4 1072.2,961.7 1073.2,961.4 1074.2,961.4 1075.2,960.4 1076.2,960.7 1077.2,958.3 1078.2,960.3 1079.2,957.7 1080.2,957.8 1081.2,956.1 1082.2,957.4 1083.2,957.6 1084.2,956.8 1085.2,956.1 1086.2,953.3 1087.2,953.5 1088.2,953.3 1089.2,952.4 1090.2,954.0 1091.2,952.5 1092.2,951.7 1093.2,951.1 1094.2,948.2 1095.2,947.0 1096.2,945.7 1097.2,946.1 1098.2,944.6 1099.2,943.6 1100.2,943.1 1101.2,939.0 1102.2,938.5 1103.2,938.2 1104.2,935.0 1105.2,934.9 1106.2,935.8 1107.2,934.9 1108.2,933.1 1109.2,930.0 1110.2,927.4 1111.2,927.3 1112.2,923.0 1113.2,922.1 1114.2,921.6 1115.2,917.2 1116.2,914.9 1117.2,914.3 1118.2,913.7 1119.2,911.6 1120.2,909.3 1121.2,908.0 1122.2,902.2 1123.2,901.6 1124.2,901.6 1125.2,897.5 1126.2,895.3 1127.2,893.7 1128.2,892.7 1129.2,893.1 1130.2,889.8 1131.2,890.4 1132.2,891.7 1133.2,886.0 1134.2,887.4 1135.2,883.2 1136.2,877.9 1137.2,877.6 1138.2,873.8 1139.2,875.7 1140.2,869.0 1141.2,873.2 1142.2,869.6 1143.2,860.4 1144.2,865.5 1145.2,865.7 1146.2,857.0 1147.2,858.9 1148.2,849.6 1149.2,853.9 1150.2,846.4 1151.2,851.0 1152.2,842.8 1153.2,838.0 1154.2,845.2 1155.2,849.1 1156.2,838.2 1157.2,840.5 1158.2,834.9 1159.2,829.6 1160.2,829.5 1161.2,829.9 1162.2,817.5 1163.2,820.4 1164.2,816.9 1165.2,808.2 1166.2,817.8 1167.2,817.0 1168.2,805.3 1169.2,813.0 1170.2,804.6 1171.2,802.6 1172.2,807.3 1173.2,801.8 1174.2,801.2 1175.2,804.9 1176.2,802.6 1177.2,801.6 1178.2,794.2 1179.2,795.4 1180.2,807.2 1181.2,801.6 1182.2,806.7 1183.2,804.4 1184.2,809.6 1185.2,806.7 1186.2,818.5 1187.2,810.3 1188.2,813.0 1189.2,810.3 1190.2,813.7 1191.2,802.6 1192.2,806.9 1193.2,804.7 1194.2,806.2 1195.2,805.3 1196.2,799.8 1197.2,799.3 1198.2,794.9 1199.2,798.2 1200.2,796.3 1201.2,795.7 1202.2,798.7 1203.2,801.7 1204.2,809.9 1205.2,799.6 1206.2,802.2 1207.2,808.4 1208.2,795.6 1209.2,798.7 1210.2,803.1 1211.2,808.9 1212.2,819.8 1213.2,815.0 1214.2,820.6 1215.2,818.3 1216.2,813.5 1217.2,815.6 1218.2,827.5 1219.2,826.1 1220.2,821.7 1221.2,831.2 1222.2,823.0 1223.2,833.1 1224.2,834.7 1225.2,828.6 1226.2,828.2 1227.2,835.8 1228.2,831.1 1229.2,838.0 1230.2,832.8 1231.2,840.2 1232.2,839.8 1233.2,840.3 1234.2,841.6 1235.2,848.1 1236.2,844.9 1237.2,852.2 1238.2,854.2 1239.2,859.7 1240.2,856.6 1241.2,866.3 1242.2,862.9 1243.2,862.8 1244.2,871.0 1245.2,873.9 1246.2,871.6 1247.2,871.7 1248.2,876.0 1249.2,876.4 1250.2,878.5 1251.2,884.5 1252.2,883.6 1253.2,884.9 1254.2,887.7 1255.2,889.6 1256.2,894.3 1257.2,896.8 1258.2,897.0 1259.2,900.4 1260.2,907.4 1261.2,905.2 1262.2,905.6 1263.2,911.5 1264.2,909.6 1265.2,909.1 1266.2,914.1 1267.2,913.1 1268.2,915.5 1269.2,918.4 1270.2,919.5 1271.2,920.0 1272.2,922.0 1273.2,923.5 1274.2,928.2 1275.2,927.2 1276.2,928.9 1277.2,933.9 1278.2,931.4 1279.2,935.2 1280.2,936.0 1281.2,935.1 1282.2,934.4 1283.2,938.0 1284.2,939.4 1285.2,940.8 1286.2,940.7 1287.2,943.1 1288.2,944.4 1289.2,942.7 1290.2,946.7 1291.2,946.4 1292.2,946.6 1293.2,947.9 1294.2,951.4 1295.2,951.2 1296.2,948.9 1297.2,951.5 1298.2,951.9 1299.2,952.4 1300.2,952.6 1301.2,952.2 1302.2,955.1 1303.2,954.0 1304.2,955.1 1305.2,955.4 1306.2,955.8 1307.2,957.8 1308.2,958.0 1309.2,957.6 1310.2,957.9 1311.2,958.9 1312.2,960.7 1313.2,960.5 1314.2,961.1 1315.2,961.2 1316.2,961.9 1317.2,962.8 1318.2,961.7 1319.2,965.1 1320.2,963.7" fill="none" stroke="#fff" stroke-width="2" stroke-linejoin="miter"/>
</svg>

<div class="a" style="left:1905px;top:258px;width:15px;height:710px;background:linear-gradient(#fff 0,#fff 6px,#ff0000 6px,#ff1000 32px,#ff2800 52px,#ff4000 72px,#ff6000 92px,#ff7800 122px,#ff8800 142px,#ffa000 162px,#ffb400 182px,#ffe000 212px,#ffff00 232px,#f0f800 262px,#c8f000 282px,#98e000 302px,#50d000 317px,#20c000 332px,#00b800 347px,#00c800 367px,#00e800 397px,#00f090 412px,#00f8e0 427px,#00ffff 437px,#00d8ff 452px,#00b0ff 472px,#0098f8 487px,#0080e8 502px,#0068d0 522px,#0050c8 537px,#0020c0 547px,#0000e0 557px,#0000ff 567px,#4000ff 577px,#8000ff 590px,#c000f0 602px,#e000c0 612px,#e800a0 622px,#c00080 632px,#a00070 647px,#800060 662px,#600058 677px,#400048 692px,#280038 705px,#393a3b 705px,#393a3b 710px)"></div>

<!-- STATUS BAR -->
<div class="a" style="left:0;top:968px;width:1920px;height:41px;background:linear-gradient(#a2a2a2 0,#a2a2a2 1px,#2c2c2c 1px,#2c2c2c 2px,#40434a 3px,#464951 9px,#43464d 14px,#3b3b3c 15px,#3a3a3a)"></div>
<div class="a" style="left:591px;top:967px;width:185px;height:2px;background:#b4b4b4"></div><div class="a" style="left:776px;top:968px;width:948px;height:1px;background:#8d7f98"></div><div class="a" style="left:1724px;top:967px;width:181px;height:2px;background:#b4b4b4"></div>
<svg class="a" style="left:760px;top:950px" width="32" height="20"><path d="M768.5 969 A7.5 7.5 0 0 1 783.5 969" transform="translate(-760,-950)" fill="none" stroke="#ff0000" stroke-width="3"/></svg>
<div class="t" style="left:-7.5px;top:979.5px;font-size:19px;color:#fff">准备就绪</div>
<svg class="a" style="left:1270px;top:970px" width="40" height="36"><g fill="#fff"><rect x="7" y="16.5" width="2" height="1.5"/><rect x="11" y="16.5" width="2" height="1.5"/><rect x="15" y="16.5" width="2" height="1.5"/><rect x="23" y="16.5" width="2" height="1.5"/><rect x="27" y="16.5" width="2" height="1.5"/><rect x="19.5" y="9" width="1.5" height="2"/><rect x="19.5" y="13" width="1.5" height="2"/><rect x="19.5" y="21" width="1.5" height="2"/><rect x="19.5" y="25" width="1.5" height="2"/><rect x="18.5" y="16" width="3" height="3"/></g></svg>
<div class="t" style="left:1308px;top:979.6px;font-size:19px;color:#fff">3,566.00 cnts</div>
<div class="t" style="left:1432px;top:979.6px;font-size:19px;color:#fff">7 Hz</div>
<svg class="a" style="left:1478px;top:976px" width="30" height="28">
 <rect x="9" y="1.5" width="5" height="2" fill="#777"/>
 <circle cx="11" cy="14" r="7.5" fill="#f4f4f4" stroke="#bbb" stroke-width="1"/>
 <path d="M11 14V8M11 14L7 16" stroke="#e01010" stroke-width="1.6"/>
 <rect x="16" y="14" width="10" height="10" fill="#18b818"/>
 <path d="M18 19L20.5 21.5L24.5 16.5" fill="none" stroke="#fff" stroke-width="1.8"/>
</svg>
<div class="a" style="left:1522px;top:977.5px;width:24px;height:24px;background:#ababab;border-radius:1px"></div>
<div class="t b" style="left:1525.5px;top:979.5px;font-size:26px;color:#343434;-webkit-text-stroke:0.6px #343434;line-height:20px">S</div>
<div class="a" style="left:1555.5px;top:977.5px;width:24px;height:24px;background:#ababab;border-radius:1px"></div>
<div class="t b" style="left:1558px;top:979.5px;font-size:26px;color:#343434;-webkit-text-stroke:0.6px #343434;line-height:20px">U</div>
<div class="a" style="left:1604.5px;top:985px;width:166px;height:6px;background:#e9e9e9;border:1px solid #a9a9a9;border-radius:1px"></div>
<div class="a" style="left:1750px;top:975px;width:16px;height:27px;background:#ededed;border:1px solid #9a9a9a"></div>
<div class="a" style="left:1785px;top:975px;width:82px;height:30px;background:#f1f1f1;border:1.5px solid #e6e6e6;border-radius:4px;overflow:hidden"><div class="a" style="right:0;top:0;width:22px;height:100%;background:#2e2e2e"></div></div>
<div class="a" style="left:1850px;top:981px;width:0;height:0;border-left:5px solid transparent;border-right:5px solid transparent;border-bottom:4px solid #9a9a9a"></div>
<div class="a" style="left:1850px;top:995px;width:0;height:0;border-left:5px solid transparent;border-right:5px solid transparent;border-top:4px solid #9a9a9a"></div>
<div class="t" style="left:1817px;top:978.5px;font-size:19px;color:#6a6a6a">15</div>
<div class="a" style="left:1872px;top:975.5px;width:38px;height:29px;background:linear-gradient(#fbfbfc,#dfe3e8);border:1.5px solid #a9acb0;border-radius:4px"></div>
<div class="t" style="left:1873px;top:979px;font-size:19px;color:#8a8a8a">B</div>
<div class="a" style="left:1896px;top:987px;width:0;height:0;border-left:4.5px solid transparent;border-right:4.5px solid transparent;border-top:5px solid #777"></div>
</body></html>
